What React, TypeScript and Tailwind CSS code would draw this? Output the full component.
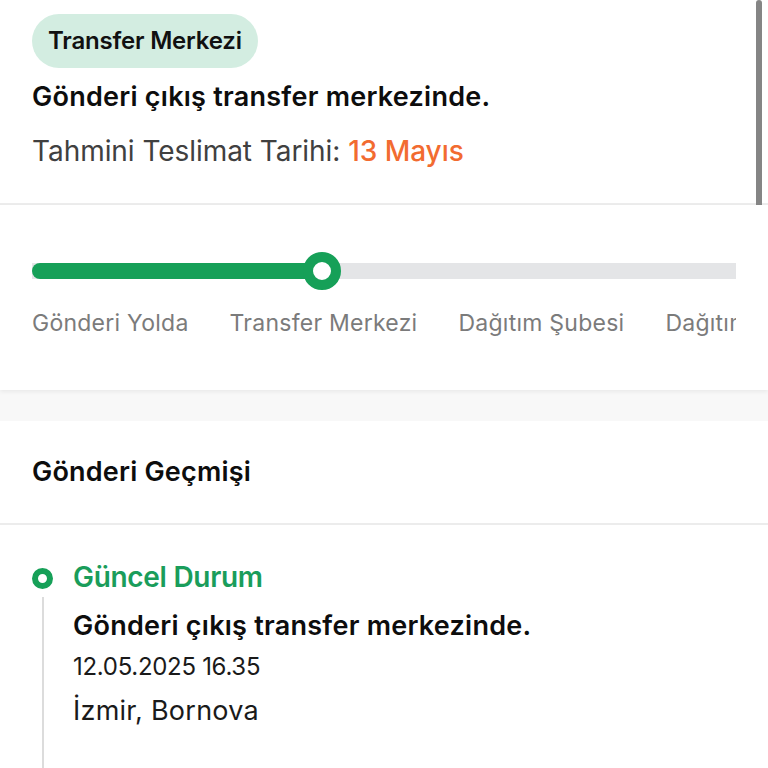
import React from "react";

export default function App() {
  const font = { fontFamily: "Inter, 'Noto Sans', sans-serif" };
  return (
    <div className="relative w-[768px] h-[768px] overflow-hidden bg-white" style={font}>
      {/* top card */}
      <div className="bg-white">
        <div className="px-[32px] pt-[14px] pb-[35px]">
          <div className="inline-flex items-center h-[54px] px-[16px] rounded-full bg-[#d3ede1]">
            <span className="text-[24px] font-semibold text-[#111] tracking-[-0.2px]">Transfer Merkezi</span>
          </div>
          <div className="mt-[12px] text-[27px] font-semibold text-[#0d0d0d] leading-[34px] tracking-[0.25px] whitespace-nowrap">
            Gönderi çıkış transfer merkezinde.
          </div>
          <div className="mt-[20px] text-[28px] text-[#404040] leading-[34px] tracking-[-0.05px] whitespace-nowrap">
            Tahmini Teslimat Tarihi: <span className="text-[#f26b30] font-medium">13 Mayıs</span>
          </div>
        </div>
      </div>
      <div className="h-[2px] bg-[#ececec] w-[768px]" />
      <div className="bg-white shadow-[0_2px_4px_rgba(0,0,0,0.06)] relative z-10">
        <div className="pl-[32px] pr-[32px] pt-[46px] pb-[52px]">
          <div className="relative h-[40px] w-[704px] flex items-center">
            <div className="absolute left-0 right-0 h-[16px] bg-[#e4e5e7]" />
            <div className="absolute left-0 w-[290px] h-[16px] bg-[#16a058] rounded-l-full" />
            <div className="absolute left-[271px] w-[38px] h-[38px] rounded-full border-[10px] border-[#16a058] bg-white" />
          </div>
          <div className="mt-[17px] flex gap-[41px] overflow-hidden whitespace-nowrap text-[23px] text-[#7b7b7b] leading-[30px] tracking-[0.25px] w-[704px]">
            <span>Gönderi Yolda</span>
            <span>Transfer Merkezi</span>
            <span>Dağıtım Şubesi</span>
            <span>Dağıtım Merkezi</span>
          </div>
        </div>
      </div>
      <div className="h-[31px] bg-[#f8f8f8]" />
      {/* history */}
      <div className="bg-white">
        <div className="px-[32px] h-[102px] flex items-center">
          <span className="text-[27px] font-semibold text-[#0d0d0d] tracking-[0.2px]">Gönderi Geçmişi</span>
        </div>
        <div className="h-[2px] bg-[#ececec]" />
        <div className="pl-[32px] pt-[35px] flex gap-[20px]">
          <div className="flex flex-col items-center w-[21px]">
            <div className="mt-[8px] w-[21px] h-[21px] rounded-full border-[6px] border-[#16a058] bg-white" />
            <div className="w-[2px] h-[200px] bg-[#dcdcdc] mt-[8px]" />
          </div>
          <div className="flex flex-col whitespace-nowrap">
            <div className="text-[28px] font-semibold text-[#1a9d5b] leading-[34px] tracking-[-0.3px]">Güncel Durum</div>
            <div className="mt-[15px] text-[27px] font-semibold text-[#0d0d0d] leading-[34px] tracking-[0.25px]">
              Gönderi çıkış transfer merkezinde.
            </div>
            <div className="mt-[9px] text-[24px] text-[#1a1a1a] leading-[30px] tracking-[-0.3px]">12.05.2025 16.35</div>
            <div className="mt-[12px] text-[27px] text-[#1a1a1a] leading-[34px] tracking-[0.25px]">İzmir, Bornova</div>
          </div>
        </div>
      </div>
      {/* scrollbar */}
      <div className="absolute left-[756px] top-0 w-[6px] h-[336px] rounded-full bg-[#858585]" />
    </div>
  );
}
